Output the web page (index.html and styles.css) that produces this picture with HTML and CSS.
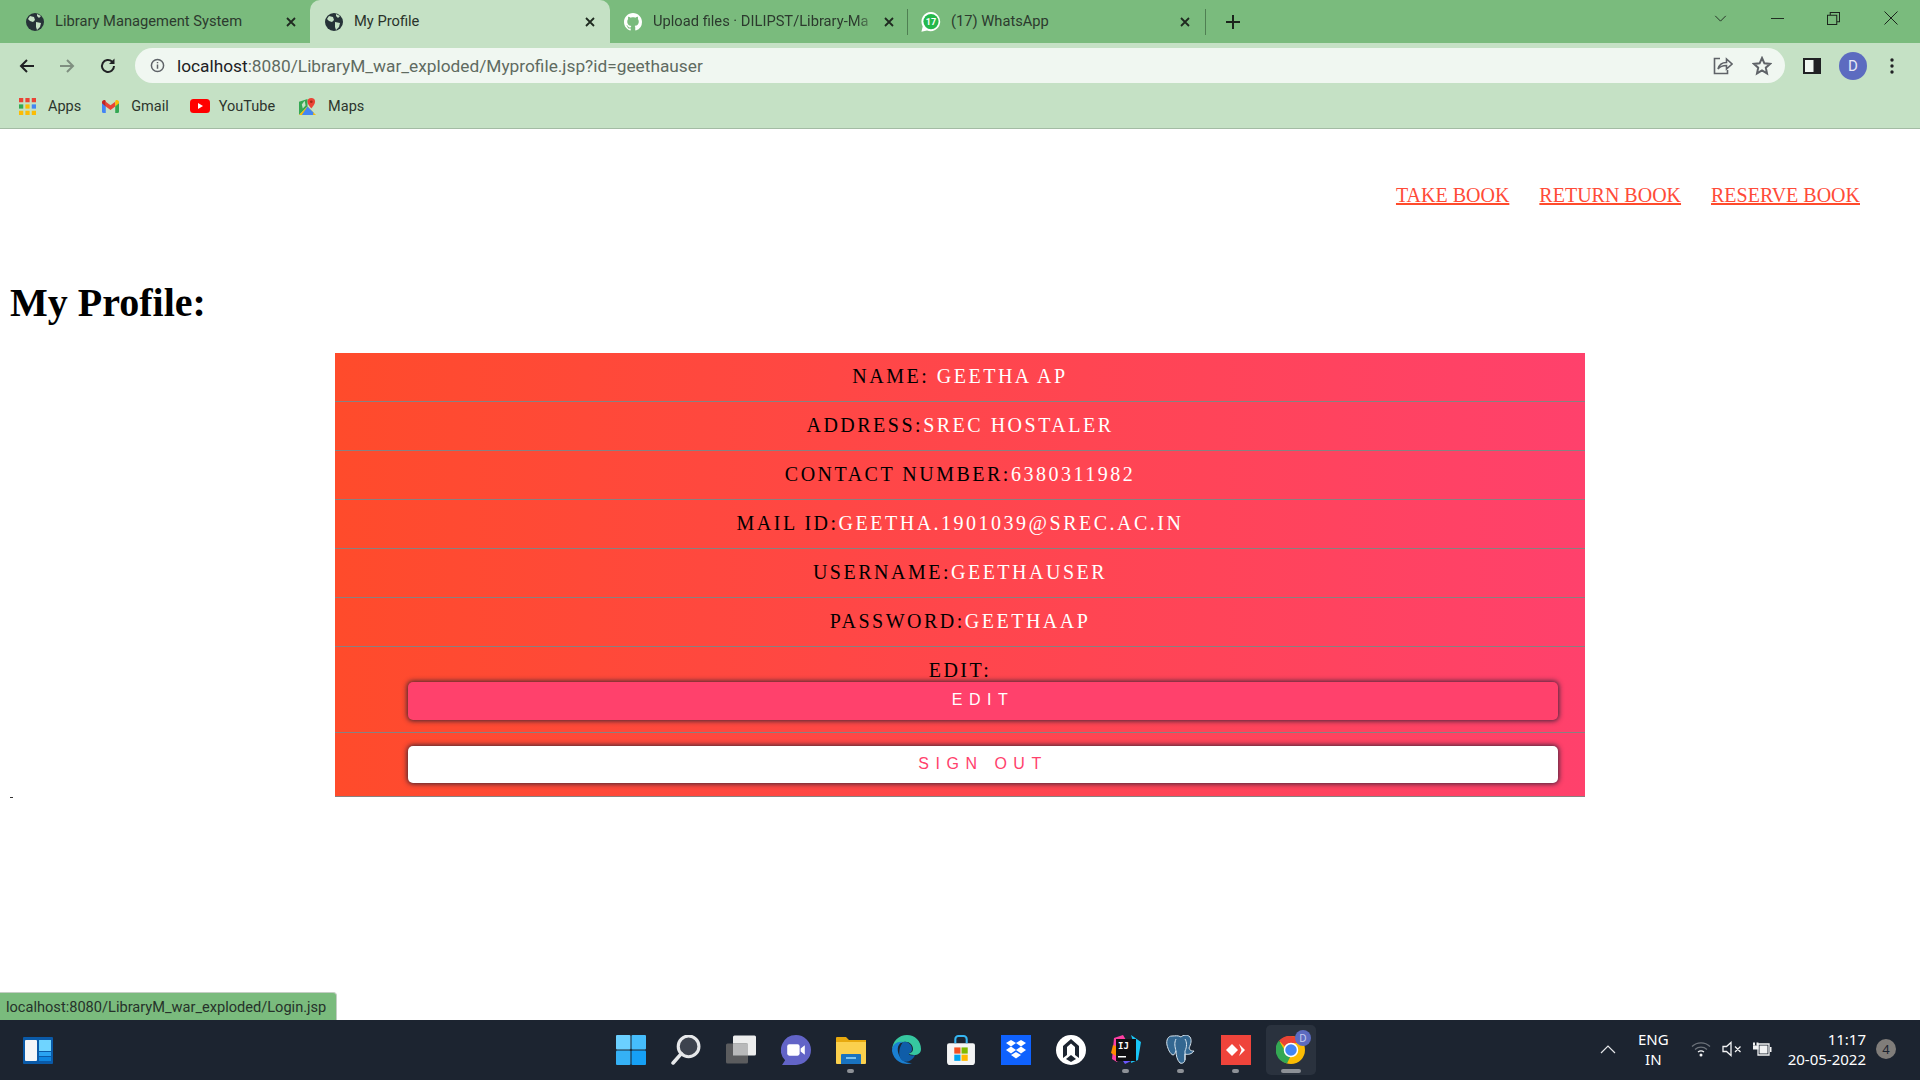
FILE: index.html
```html
<!DOCTYPE html>
<html lang="en">
<head>
<meta charset="utf-8">
<title>My Profile</title>
<link rel="stylesheet" href="styles.css">
</head>
<body>
<div class="app">
  <header class="tabstrip">
    <div class="tab tab-first">
      <svg class="fav" viewBox="0 0 18 18"><circle cx="9" cy="9" r="9" fill="#263238"/><path d="M4 3l4 1 1 3-2 2-3-1-2-2zM10 9l5 1-1 4-3 3-1-3zM11 1l4 2-2 2-2-2z" fill="#c5e1c5"/></svg>
      <span class="tab-title">Library Management System</span>
      <svg class="tab-x" viewBox="0 0 10 10"><path d="M1 1l8 8M9 1l-8 8"/></svg>
    </div>
    <div class="tab tab-active">
      <svg class="fav" viewBox="0 0 18 18"><circle cx="9" cy="9" r="9" fill="#263238"/><path d="M4 3l4 1 1 3-2 2-3-1-2-2zM10 9l5 1-1 4-3 3-1-3zM11 1l4 2-2 2-2-2z" fill="#c5e1c5"/></svg>
      <span class="tab-title">My Profile</span>
      <svg class="tab-x" viewBox="0 0 10 10"><path d="M1 1l8 8M9 1l-8 8"/></svg>
    </div>
    <div class="tab tab-gh">
      <svg class="fav" viewBox="0 0 16 16"><path fill="#fff" d="M8 0C3.58 0 0 3.58 0 8c0 3.54 2.29 6.53 5.47 7.59.4.07.55-.17.55-.38 0-.19-.01-.82-.01-1.49-2.01.37-2.53-.49-2.69-.94-.09-.23-.48-.94-.82-1.13-.28-.15-.68-.52-.01-.53.63-.01 1.08.58 1.23.82.72 1.21 1.87.87 2.33.66.07-.52.28-.87.51-1.07-1.78-.2-3.64-.89-3.64-3.95 0-.87.31-1.59.82-2.15-.08-.2-.36-1.02.08-2.12 0 0 .67-.21 2.2.82.64-.18 1.32-.27 2-.27.68 0 1.36.09 2 .27 1.53-1.04 2.2-.82 2.2-.82.44 1.1.16 1.92.08 2.12.51.56.82 1.27.82 2.15 0 3.07-1.87 3.75-3.65 3.95.29.25.54.73.54 1.48 0 1.07-.01 1.93-.01 2.2 0 .21.15.46.55.38A8.013 8.013 0 0016 8c0-4.42-3.58-8-8-8z"/></svg>
      <span class="tab-title tab-fade">Upload files · DILIPST/Library-Ma</span>
      <svg class="tab-x" viewBox="0 0 10 10"><path d="M1 1l8 8M9 1l-8 8"/></svg>
    </div>
    <div class="tab tab-wa">
      <svg class="fav" viewBox="0 0 20 20"><path fill="#fff" d="M10 0a9.6 9.6 0 0 0-8.3 14.4L.4 19.8l5.6-1.3A9.6 9.6 0 1 0 10 0z"/><circle cx="10" cy="9.6" r="7.6" fill="#25b84c"/><text x="10" y="13.2" class="wa-num">17</text></svg>
      <span class="tab-title">(17) WhatsApp</span>
      <svg class="tab-x" viewBox="0 0 10 10"><path d="M1 1l8 8M9 1l-8 8"/></svg>
    </div>
    <svg class="newtab" viewBox="0 0 14 14"><path d="M7 0v14M0 7h14"/></svg>
    <div class="winctl">
      <svg viewBox="0 0 14 8" class="wc wc-chev"><path d="M1 1l6 6 6-6"/></svg>
      <svg viewBox="0 0 14 14" class="wc wc-min"><path d="M0 7h14"/></svg>
      <svg viewBox="0 0 14 14" class="wc wc-res"><path d="M.5 3.5h10v10H.5zM3.5 3.500v-3h10v10h-3"/></svg>
      <svg viewBox="0 0 14 14" class="wc wc-close"><path d="M.5.5l13 13M13.500.5l-13 13"/></svg>
    </div>
  </header>

  <nav class="toolbar">
    <svg class="tool tool-back" viewBox="0 0 18 18"><path d="M16 9H3M9 3L3 9l6 6"/></svg>
    <svg class="tool tool-fwd" viewBox="0 0 18 18"><path d="M2 9h13M9 3l6 6-6 6"/></svg>
    <svg class="tool tool-reload" viewBox="0 0 18 18"><path d="M15 9a6 6 0 1 1-1.800-4.300"/><path class="solid" d="M15.500 1.500v5.500H10z"/></svg>
    <div class="omnibox">
      <svg class="info" viewBox="0 0 16 16"><circle cx="8" cy="8" r="6.500"/><path d="M8 7v4.500M8 4.200v1.500"/></svg>
      <span class="url"><span class="url-host">localhost</span>:8080/LibraryM_war_exploded/Myprofile.jsp?id=geethauser</span>
      <svg class="omni-ic omni-share" viewBox="0 0 20 20"><path d="M7 2.500H1.500v15h13V14"/><path d="M5 13c1-4 4-6.500 8.500-6.500V3l5.500 5-5.500 5V9.500C10 9.500 7 10.500 5 13z"/></svg>
      <svg class="omni-ic omni-star" viewBox="0 0 20 20"><path d="M10 2l2.400 5.300 5.600.6-4.200 3.800 1.200 5.700-5-3-5 3 1.200-5.700L2 7.900l5.600-.6z"/></svg>
    </div>
    <svg class="panel" viewBox="0 0 18 16"><rect width="18" height="16" fill="#202124"/><rect x="2" y="2" width="8.500" height="12" fill="#f0f7f1"/></svg>
    <div class="avatar">D</div>
    <svg class="dots" viewBox="0 0 4 16"><circle cx="2" cy="2" r="1.700"/><circle cx="2" cy="8" r="1.700"/><circle cx="2" cy="14" r="1.700"/></svg>
  </nav>

  <div class="bookmarks">
    <div class="bm bm-apps">
      <svg class="bm-ic" viewBox="0 0 16 16"><g fill="#ea4335"><rect x="0" y="0" width="4" height="4"/><rect x="6" y="0" width="4" height="4"/><rect x="12" y="0" width="4" height="4"/></g><g fill="#34a853"><rect x="0" y="6" width="4" height="4"/></g><g fill="#fbbc04"><rect x="6" y="6" width="4" height="4"/><rect x="12" y="12" width="4" height="4"/><rect x="6" y="12" width="4" height="4"/></g><g fill="#4285f4"><rect x="12" y="6" width="4" height="4"/></g><rect x="0" y="12" width="4" height="4" fill="#fbbc04"/></svg>
      <span>Apps</span>
    </div>
    <div class="bm bm-gmail">
      <svg class="bm-ic" viewBox="0 0 18 14"><path fill="#4285f4" d="M0 3v9.500A1.500 1.500 0 0 0 1.500 14H4V6z"/><path fill="#34a853" d="M14 6v8h2.500a1.500 1.500 0 0 0 1.500-1.500V3z"/><path fill="#ea4335" d="M4 7V2l5 3.800L14 2v5L9 10.700z"/><path fill="#c5221f" d="M0 2.500C0 .7 2 -.5 3.500.6L4 1v6L0 3.500z"/><path fill="#fbbc04" d="M14 1l.5-.4C16-.5 18 .7 18 2.500v1L14 7z"/></svg>
      <span>Gmail</span>
    </div>
    <div class="bm bm-yt">
      <svg class="bm-ic bm-ic-yt" viewBox="0 0 20 14"><rect width="20" height="14" rx="3.500" fill="#f00"/><path d="M8 4l5 3-5 3z" fill="#fff"/></svg>
      <span>YouTube</span>
    </div>
    <div class="bm bm-maps">
      <svg class="bm-ic" viewBox="0 0 18 18"><path fill="#34a853" d="M0 4l9-3v8l-9 9z"/><path fill="#fbbc04" d="M0 18l9-9 9 9z"/><path fill="#4285f4" d="M9 9l6 6v3H3z"/><path fill="#c5e1c5" d="M6 3l1 5-3 3-1-4z"/><path fill="#ea4335" d="M13 0a4 4 0 0 0-4 4c0 3 4 7 4 7s4-4 4-7a4 4 0 0 0-4-4z"/><circle cx="13" cy="4" r="1.400" fill="#a52714"/></svg>
      <span>Maps</span>
    </div>
  </div>

  <main class="page">
    <div class="topnav">
      <a href="#" class="navlink">TAKE BOOK</a>
      <a href="#" class="navlink">RETURN BOOK</a>
      <a href="#" class="navlink">RESERVE BOOK</a>
    </div>
    <h1 class="title">My Profile:</h1>
    <section class="card">
      <div class="row">NAME: <span class="val">GEETHA AP</span></div>
      <div class="row">ADDRESS:<span class="val">SREC HOSTALER</span></div>
      <div class="row">CONTACT NUMBER:<span class="val">6380311982</span></div>
      <div class="row">MAIL ID:<span class="val">GEETHA.1901039@SREC.AC.IN</span></div>
      <div class="row">USERNAME:<span class="val">GEETHAUSER</span></div>
      <div class="row">PASSWORD:<span class="val">GEETHAAP</span></div>
      <div class="row row-edit">
        <div class="edit-label">EDIT:</div>
        <button class="btn btn-edit">EDIT</button>
      </div>
      <div class="row row-out">
        <button class="btn btn-out">SIGN OUT</button>
      </div>
    </section>
    <div class="tick"></div>
    <div class="status">localhost:8080/LibraryM_war_exploded/Login.jsp</div>
  </main>

  <footer class="taskbar">
    <svg class="widgets" viewBox="0 0 30 27"><rect width="30" height="27" fill="#0a5aa8" rx="1"/><rect x="2" y="3" width="12" height="21" rx="1" fill="#f4f6f8"/><rect x="16" y="3" width="12" height="11" fill="#6fd4ff"/><rect x="16" y="15" width="12" height="4" fill="#2aa3f2"/><rect x="16" y="20" width="12" height="4" fill="#0f86e0"/></svg>
    <div class="dock">
      <div class="slot"><svg class="app-ic" viewBox="0 0 29 29"><rect x="0" y="0" width="14" height="14" rx="1" fill="#6bd0ff"/><rect x="15" y="0" width="14" height="14" rx="1" fill="#46bdfb"/><rect x="0" y="15" width="14" height="14" rx="1" fill="#35b1f5"/><rect x="15" y="15" width="14" height="14" rx="1" fill="#16a0f5"/></svg></div>
      <div class="slot"><svg class="app-ic" viewBox="0 0 29 29"><circle cx="17" cy="11" r="10" fill="#3d434e" stroke="#e6e8ea" stroke-width="3"/><path d="M10 18l-8 9" stroke="#e6e8ea" stroke-width="3.500" stroke-linecap="round"/></svg></div>
      <div class="slot"><svg class="app-ic" viewBox="0 0 30 29"><rect x="7" y="0" width="23" height="20" rx="1.500" fill="#eceded"/><rect x="0" y="8" width="22" height="20" rx="1.500" fill="#5b5c5e"/><rect x="7" y="8" width="15" height="12" fill="#b8b9ba"/></svg></div>
      <div class="slot"><svg class="app-ic" viewBox="0 0 29 29"><path d="M14.500 0a14.500 14.500 0 0 1 0 29H1l3-4.500A14.500 14.500 0 0 1 14.500 0z" fill="#6264c7"/><rect x="6" y="9" width="12" height="11" rx="2" fill="#fff"/><path d="M19 13l4-3v9l-4-3z" fill="#fff"/></svg></div>
      <div class="slot slot-run"><svg class="app-ic" viewBox="0 0 30 28"><path d="M0 2a1 1 0 0 1 1-1h9l3 3h17v4H0z" fill="#e8a90e"/><path d="M0 6h30v21a1 1 0 0 1-1 1H1a1 1 0 0 1-1-1z" fill="#fbd04d"/><path d="M5 19a1 1 0 0 1 1-1h18a1 1 0 0 1 1 1v9H5z" fill="#1973c0"/><rect x="10" y="21" width="10" height="2" fill="#7cc3ee"/></svg></div>
      <div class="slot"><svg class="app-ic" viewBox="0 0 30 30"><path d="M1 16C1 6 8 0 16 0c8 0 14 6 14 14 0 4-3 6-7 6-3 0-5-1-5-2 3 0 4-2 4-4 0-4-4-8-9-7C7 8 1 10 1 16z" fill="#36c7a0"/><path d="M1 16C1 9 7 6 12 7c-4 1-6 5-5 10 1 6 7 12 14 11a15 15 0 0 1-20-12z" fill="#1a7fd1"/><path d="M12 7c5-1 9 3 9 7 0 2-1 4-3 4-1 2 2 3 6 2-2 5-7 8-12 6C8 24 6 15 12 7z" fill="#0f5da8"/></svg></div>
      <div class="slot"><svg class="app-ic" viewBox="0 0 29 29"><path d="M3 8h23a2 2 0 0 1 2 2v16a3 3 0 0 1-3 3H4a3 3 0 0 1-3-3V10a2 2 0 0 1 2-2z" fill="#f4f5f5"/><path d="M9 8V4a3 3 0 0 1 3-3h5a3 3 0 0 1 3 3v4" fill="none" stroke="#35b6f2" stroke-width="2"/><rect x="8" y="12" width="6" height="6" fill="#f25022"/><rect x="15" y="12" width="6" height="6" fill="#7fba00"/><rect x="8" y="19" width="6" height="6" fill="#00a4ef"/><rect x="15" y="19" width="6" height="6" fill="#ffb900"/></svg></div>
      <div class="slot"><svg class="app-ic" viewBox="0 0 30 30"><rect width="30" height="30" fill="#0f62fe"/><g fill="#fff"><path d="M10 5l5 3-5 3.500L5 8z"/><path d="M20 5l5 3-5 3.500L15 8z"/><path d="M10 11.500L15 15l-5 3.500L5 15z"/><path d="M20 11.500L25 15l-5 3.500L15 15z"/><path d="M10 20l5-3 5 3-5 3.500z"/></g></svg></div>
      <div class="slot"><svg class="app-ic" viewBox="0 0 30 30"><circle cx="15" cy="15" r="15" fill="#fff"/><path d="M7 23V11l8-7 8 7v12l-4-3v-8l-4-3.500L11 12v8z" fill="#1c2430"/><path d="M10 24l5-4 5 4-5 3z" fill="#1c2430"/></svg></div>
      <div class="slot slot-run"><svg class="app-ic" viewBox="0 0 30 30"><path d="M3 3l9-3 3 5-9 22-5-3z" fill="#fd3fa3"/><path d="M2 10l5 2-2 9-5-3z" fill="#ff8c00"/><path d="M20 0l10 7-3 18-7 3 2-22z" fill="#19c5f5"/><path d="M8 20l14 5-8 4z" fill="#6b57ff"/><rect x="5" y="4" width="20" height="22" fill="#0f0f12"/><text x="7" y="14" class="ij-txt">IJ</text><rect x="7" y="21" width="8" height="1.500" fill="#fff"/></svg></div>
      <div class="slot slot-run"><svg class="app-ic" viewBox="0 0 30 30"><path d="M6 1c-4 0-6 4-5 9 1 4 3 9 6 10 2 0 2-3 3-4 0 4 1 9 4 12 3 1 5-1 5-4v-5c3 1 7 0 9-3-2 0-4 0-5-3 2-4 3-8 1-11C21-1 17 0 15 2 12 0 9 1 6 1z" fill="#336791" stroke="#d7e4ee" stroke-width="1"/><path d="M10 4c-2 4-1 8 0 12M19 4c2 3 2 8 0 12v9" fill="none" stroke="#d7e4ee" stroke-width="1"/></svg></div>
      <div class="slot slot-run"><svg class="app-ic" viewBox="0 0 30 30"><rect width="30" height="30" fill="#ef443b"/><path d="M11 9l6 6-6 6-6-6z" fill="#fff"/><path d="M18 9l6 6-6 6 2.500-6z" fill="#fff"/></svg></div>
      <div class="slot slot-active">
        <svg class="app-ic" viewBox="0 0 30 30"><circle cx="15" cy="15" r="14" fill="#fbbc04"/><path d="M15 1a14 14 0 0 1 12.100 7H15a7 7 0 0 0-6.100 3.500L3 5.600A14 14 0 0 1 15 1z" fill="#ea4335"/><path d="M3 5.600L9 16a7 7 0 0 0 6 4l-4 8.500A14 14 0 0 1 3 5.600z" fill="#34a853"/><circle cx="15" cy="15" r="6.500" fill="#4285f4" stroke="#fff" stroke-width="1.500"/></svg>
        <span class="chrome-badge">D</span>
      </div>
    </div>
    <div class="tray">
      <svg class="tray-chev" viewBox="0 0 16 9"><path d="M1 8l7-7 7 7"/></svg>
      <div class="lang"><div>ENG</div><div>IN</div></div>
      <svg class="tray-ic tray-wifi" viewBox="0 0 20 16"><path class="dim" d="M1 5.500a13 13 0 0 1 18 0M4 8.500a9 9 0 0 1 12 0"/><path d="M7 11a5 5 0 0 1 6 0"/><circle class="solid" cx="10" cy="14" r="1.500"/></svg>
      <svg class="tray-ic" viewBox="0 0 20 16"><path d="M1 5.500h3.500L9 1.500v13l-4.500-4H1zM13 5.500l5.500 5.500M18.500 5.500L13 11"/></svg>
      <svg class="tray-ic tray-batt" viewBox="0 0 20 16"><rect class="solid" x="1" y="1.500" width="2" height="3"/><rect class="solid" x="4.500" y="1.500" width="2" height="3"/><rect class="solid" x="1" y="4.500" width="5.500" height="4"/><path d="M6 3h11v11H6z"/><rect class="solid" x="7.500" y="4.500" width="8" height="8"/><rect class="solid" x="18" y="6" width="1.500" height="5"/></svg>
      <div class="clock"><div>11:17</div><div>20-05-2022</div></div>
      <div class="notif">4</div>
    </div>
  </footer>
</div>
</body>
</html>
```
FILE: styles.css
```css
* { box-sizing: border-box; }
html, body { margin: 0; padding: 0; height: 100%; overflow: hidden; background: #fff; }
.app { width: 1920px; height: 1080px; display: flex; flex-direction: column; font-family: "Roboto", "Noto Sans", sans-serif; }

/* tab strip */
.tabstrip { height: 43px; background: #7abb7d; display: flex; align-items: stretch; flex: none; }
.tab { display: flex; align-items: center; font-size: 14.7px; line-height: 20px; color: #2c3a2e; position: relative; }
.tab-first { width: 310px; padding-left: 26px; padding-right: 14px; }
.tab-active { width: 300px; padding: 0 15px 0 15px; background: #c5e1c5; border-radius: 10px 10px 0 0; color: #2a332b; }
.tab-gh { width: 297px; padding: 0 13px 0 14px; }
.tab-wa { width: 298px; padding: 0 15px 0 13px; border-left: 1px solid #4f7f52; height: 26px; align-self: center; }
.tab-wa::after { content: ""; position: absolute; right: -1px; top: 0; height: 26px; width: 1px; background: #4f7f52; }
.fav { width: 18px; height: 18px; flex: none; }
.tab-wa .fav { width: 20px; height: 20px; }
.wa-num { font: bold 9px "Roboto", sans-serif; fill: #fff; text-anchor: middle; }
.tab-title { margin-left: 11px; flex: 1; white-space: nowrap; overflow: hidden; min-width: 0; padding-bottom: 1px; }
.tab-wa .tab-title { margin-left: 10px; }
.tab-fade { margin-right: 5px; -webkit-mask-image: linear-gradient(to right, #000 90%, transparent); mask-image: linear-gradient(to right, #000 90%, transparent); }
.tab-x { width: 10px; height: 10px; flex: none; stroke: #1f2a20; stroke-width: 1.800; fill: none; }
.newtab { width: 14px; height: 14px; flex: none; align-self: center; margin-left: 21px; stroke: #1b241c; stroke-width: 2; fill: none; }
.winctl { margin-left: auto; display: flex; align-items: center; height: 36px; padding-right: 22px; }
.wc { fill: none; stroke: #1b241c; stroke-width: 1; flex: none; }
.wc-chev { width: 13px; height: 7px; margin-right: 44px; }
.wc-min { width: 13px; height: 13px; margin-right: 43px; }
.wc-res { width: 13px; height: 13px; margin-right: 44px; stroke-width: 1.100; }
.wc-close { width: 14px; height: 14px; }

/* toolbar */
.toolbar { height: 45px; background: #c5e1c5; display: flex; align-items: center; flex: none; padding: 0 0 0 18px; }
.tool { width: 18px; height: 18px; flex: none; fill: none; stroke: #202124; stroke-width: 2; }
.tool-fwd { margin-left: 22px; stroke: #7f8f80; }
.tool-reload { margin-left: 23px; }
.tool-reload .solid { fill: #202124; stroke: none; }
.omnibox { margin-left: 18px; width: 1650px; height: 35px; border-radius: 18px; background: #f0f7f1; display: flex; align-items: center; padding: 0 10px 0 15px; }
.info { width: 15px; height: 15px; flex: none; fill: none; stroke: #5f6368; stroke-width: 1.600; }
.url { margin-left: 12px; font-size: 17.3px; color: #5f6b61; white-space: nowrap; }
.url-host { color: #202124; }
.omni-ic { width: 20px; height: 20px; flex: none; fill: none; stroke: #5f6368; stroke-width: 1.600; }
.omni-share { margin-left: auto; margin-right: 19px; }
.omni-star { stroke-width: 2; margin-right: 3px; }
.panel { width: 18px; height: 16px; flex: none; margin-left: 18px; }
.avatar { width: 28px; height: 28px; border-radius: 50%; background: #5c6bc0; color: #e8eaf6; font-size: 15px; display: flex; align-items: center; justify-content: center; margin-left: 18px; flex: none; }
.dots { width: 4px; height: 16px; flex: none; margin-left: 23px; fill: #202124; }

/* bookmarks */
.bookmarks { height: 41px; background: #c5e1c5; border-bottom: 1px solid #a3bba4; display: flex; align-items: center; flex: none; padding: 0 0 4px 19px; font-size: 14.5px; color: #2c352d; }
.bm { display: flex; align-items: center; gap: 12px; }
.bm-ic { width: 17px; height: 17px; flex: none; }
.bm-ic-yt { width: 20px; height: 14px; }
.bm-gmail { margin-left: 21px; }
.bm-yt { margin-left: 21px; gap: 9px; }
.bm-maps { margin-left: 24px; gap: 12px; }

/* page */
.page { flex: 1; position: relative; background: #fff; font-family: "Liberation Serif", serif; color: #000; }
.topnav { display: flex; justify-content: flex-end; gap: 30px; padding: 54px 60px 0 0; }
.navlink { font-size: 20px; line-height: 24px; color: #ff4b38; text-decoration: underline; text-decoration-color: #ff4b2b; }
.title { margin: 73px 0 0 10px; font-size: 40px; line-height: 46px; font-weight: bold; }
.card { width: 1250px; margin: 27px auto 0; background: linear-gradient(to right, #ff4b2b, #ff416c); font-size: 20px; letter-spacing: 2.5px; text-align: center; }
.row { height: 49px; padding-top: 12px; line-height: 23px; border-bottom: 1px solid #8a8080; color: #000; }
.val { color: #fff; }
.row-edit { height: 86px; }
.row-out { height: 64px; padding-top: 13px; }
.edit-label { height: 23px; }
.btn { display: block; width: 1150px; margin-left: 73px; border: none; border-radius: 5px; font-family: "Liberation Sans", sans-serif; font-size: 16px; letter-spacing: 6.5px; padding: 0 0 2px; box-shadow: 0 0 5px 1px rgba(30, 30, 50, .85); }
.btn-edit { height: 38px; background: #ff416c; color: #fff; }
.btn-out { height: 37px; background: #fff; color: #ff416c; }
.tick { position: absolute; left: 10px; top: 668px; width: 3px; height: 1px; background: #333; }
.status { position: absolute; left: 0; bottom: 0; width: 337px; height: 28px; padding: 0 0 0 6px; background: #7abb7d; border-top-right-radius: 4px; border: 1px solid #c4cdc4; border-width: 1px 1px 0 0; font-family: "Roboto", sans-serif; font-size: 14.6px; line-height: 28px; color: #26322a; white-space: nowrap; }

/* taskbar */
.taskbar { height: 60px; background: #1c2430; display: flex; align-items: center; flex: none; position: relative; padding-left: 23px; color: #fff; font-family: "Noto Sans", sans-serif; }
.widgets { width: 30px; height: 27px; flex: none; }
.dock { display: flex; margin-left: 550px; align-items: center; height: 60px; }
.slot { width: 55px; height: 50px; display: flex; align-items: center; justify-content: center; position: relative; border-radius: 5px; }
.app-ic { width: 30px; height: 30px; }
.app-ic text { fill: #fff; }
.ij-txt { font: bold 9px "DejaVu Sans Mono", monospace; }
.slot-run::after { content: ""; position: absolute; left: 24px; bottom: 2px; width: 7px; height: 4px; border-radius: 2px; background: #8d9197; }
.slot-active { background: #2a323e; width: 50px; margin-left: 3px; }
.slot-active::after { content: ""; position: absolute; left: 15px; bottom: 2px; width: 20px; height: 4px; border-radius: 2px; background: #8d9197; }
.chrome-badge { position: absolute; right: 5px; top: 5px; width: 16px; height: 16px; line-height: 16px; text-align: center; border-radius: 50%; background: #5c6bc0; color: #c7cdf0; font-size: 10px; }
.tray { display: flex; align-items: center; margin-left: auto; padding: 0 24px 2px 0; font-size: 15px; }
.tray-chev { width: 16px; height: 9px; fill: none; stroke: #e6e8ea; stroke-width: 1.200; flex: none; }
.lang { text-align: center; margin-left: 22px; line-height: 20px; }
.tray-ic { width: 20px; height: 16px; flex: none; margin-left: 11px; fill: none; stroke: #f2f3f4; stroke-width: 1.300; }
.lang + .tray-ic { margin-left: 22px; }
.tray-batt { margin-left: 10px; }
.tray-ic .dim { stroke: #6d737b; }
.tray-ic .solid { fill: #f2f3f4; stroke: none; }
.clock { text-align: right; margin-left: 16px; line-height: 20px; white-space: nowrap; }
.notif { width: 20px; height: 20px; border-radius: 50%; background: #807d7a; color: #1c2430; font-size: 13px; text-align: center; line-height: 20px; margin-left: 10px; flex: none; }
```
